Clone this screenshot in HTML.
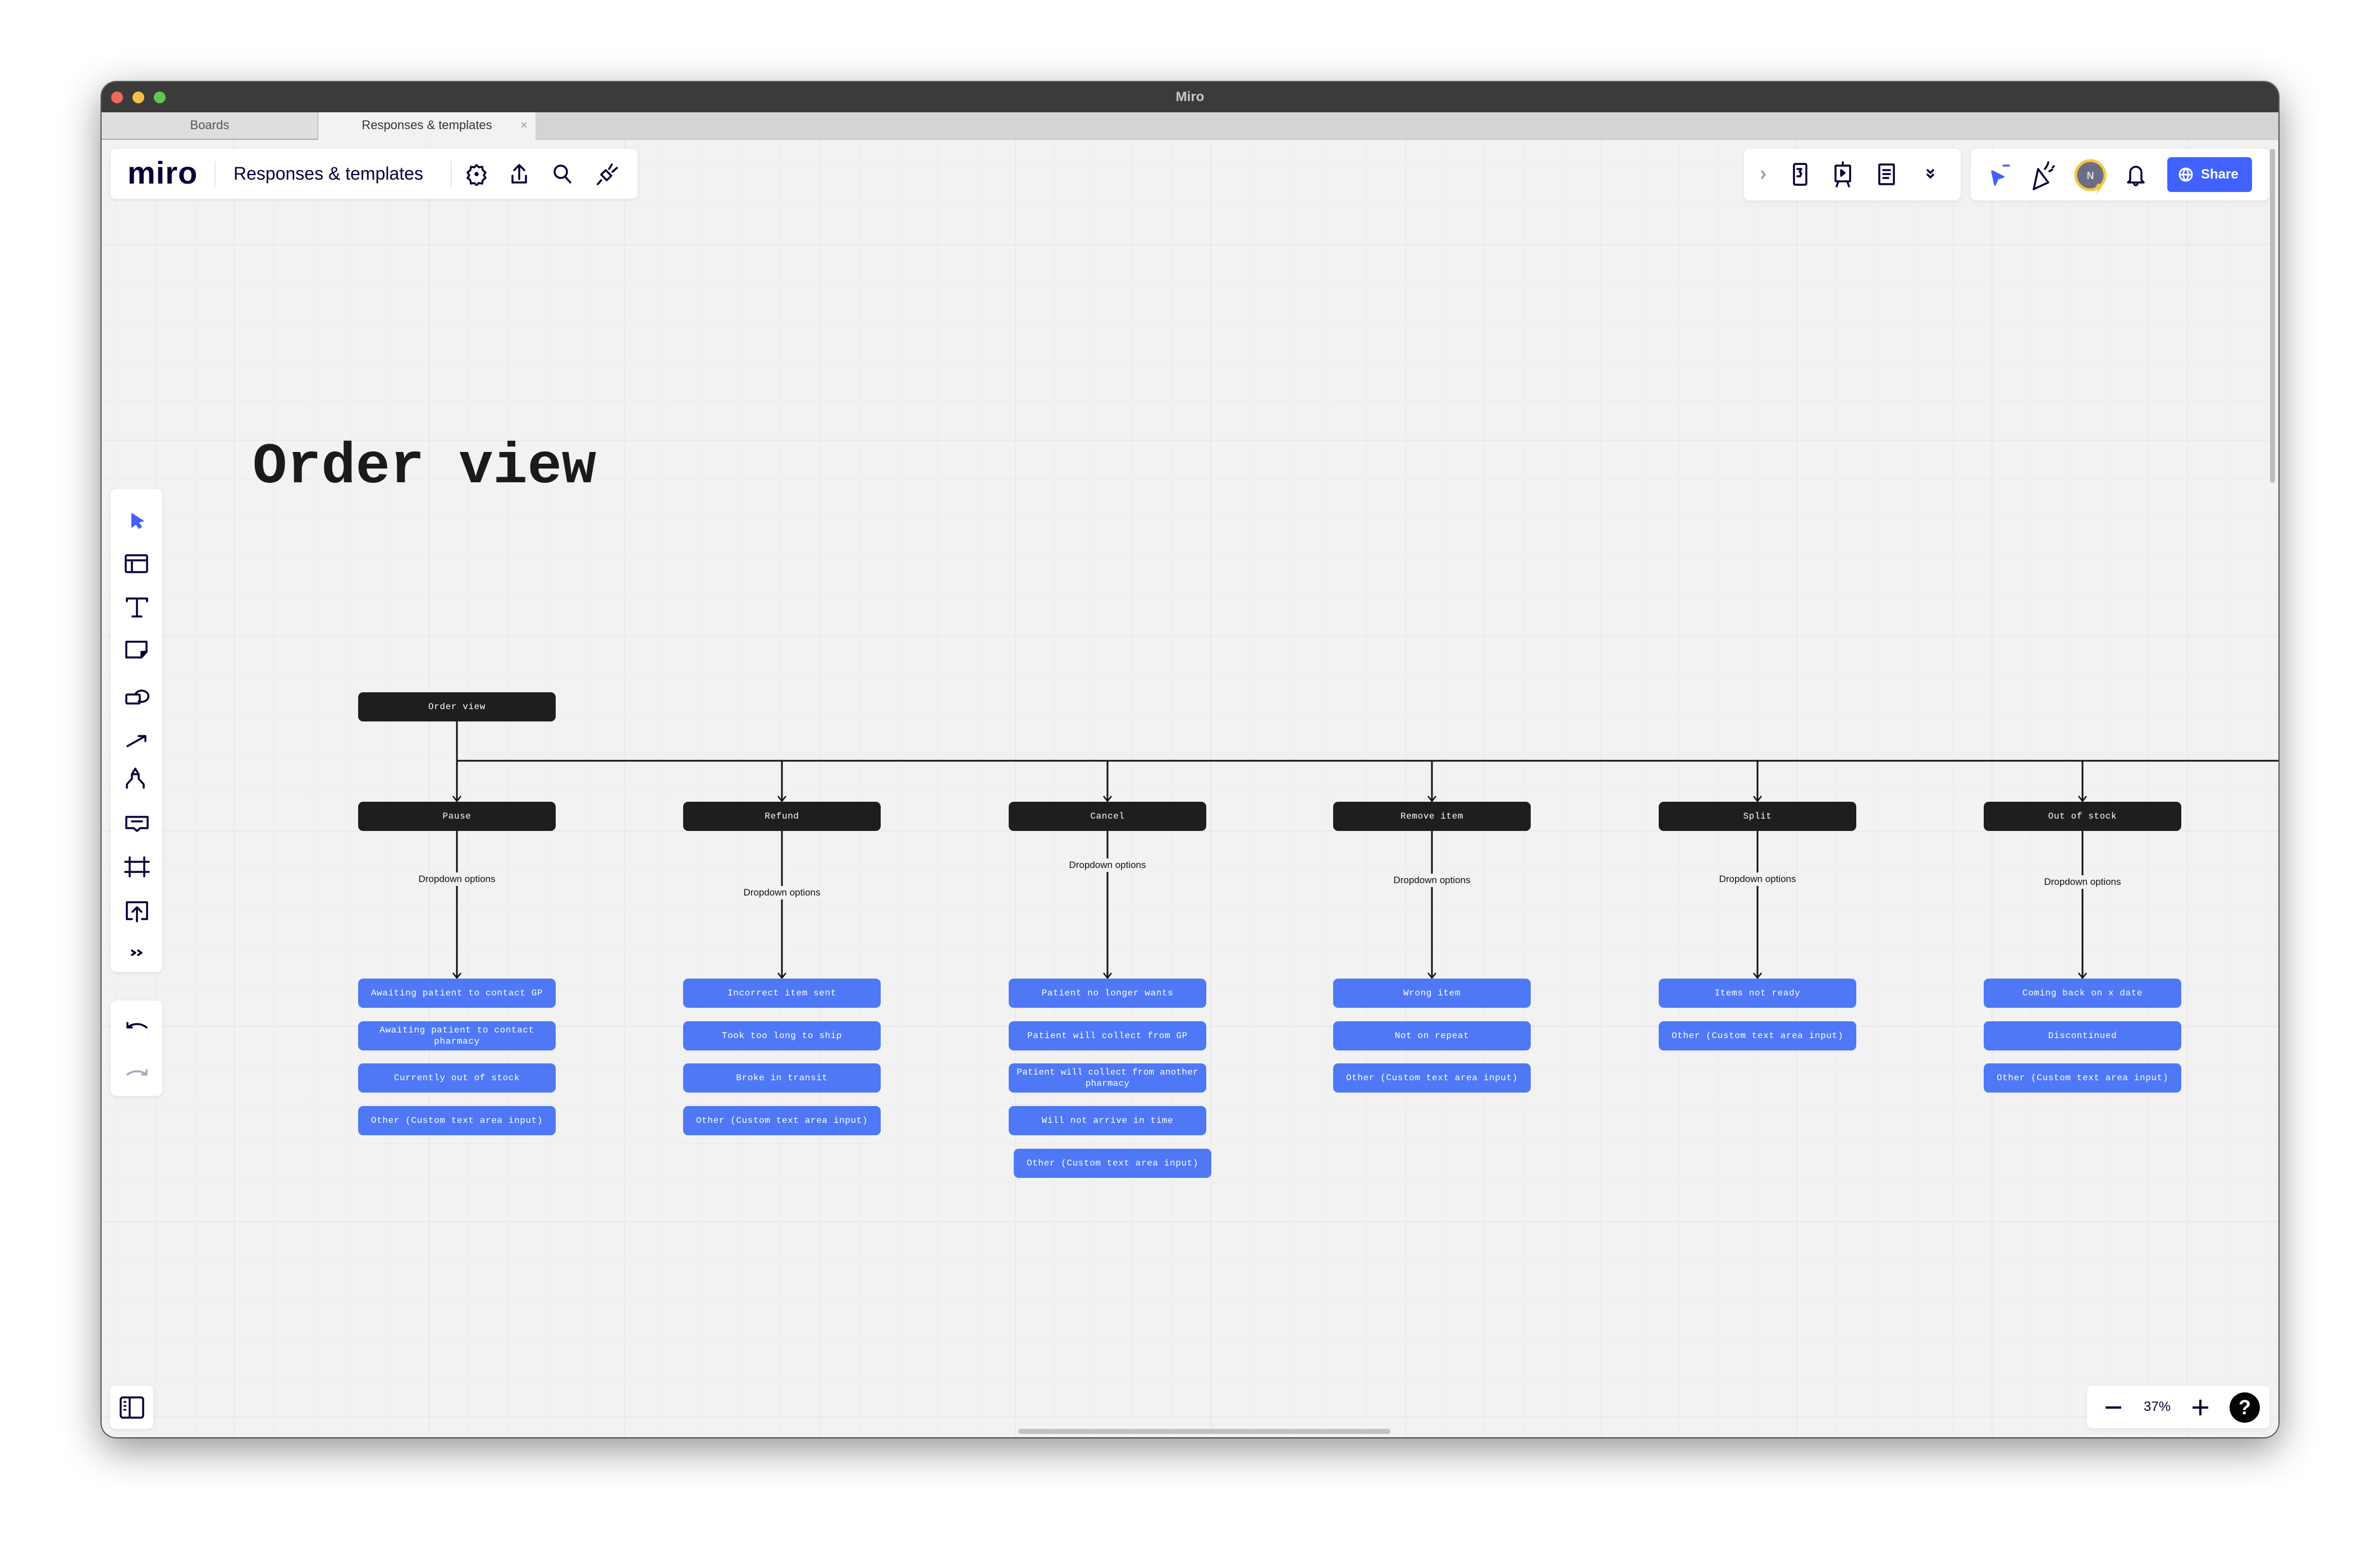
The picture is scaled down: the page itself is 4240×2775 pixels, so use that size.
<!DOCTYPE html>
<html><head><meta charset="utf-8"><style>
*{margin:0;padding:0;box-sizing:border-box}
body{width:4240px;height:2775px;background:#fff;position:relative;overflow:hidden;font-family:"Liberation Sans",sans-serif}
.win{position:absolute;left:181px;top:146px;width:3878px;height:2414px;border-radius:26px;overflow:hidden;box-shadow:0 20px 70px rgba(0,0,0,.45),0 0 0 2px #6a6a6a;background:#f2f2f2}
.title{position:absolute;left:0;top:0;width:100%;height:54px;background:#3c3b3a;color:#c8c8c8;font-size:24px;text-align:center;line-height:54px;font-weight:bold}
.dot{position:absolute;top:17px;width:21px;height:21px;border-radius:50%}
.tabs{position:absolute;left:0;top:54px;width:100%;height:49px;background:#d4d3d6;border-bottom:1px solid #bbb}
.tab{position:absolute;top:0;height:49px;text-align:center;line-height:46px;font-size:22px;color:#555}
.canvas{position:absolute;left:0;top:103px;width:100%;bottom:0;
background-color:#f2f2f2;
background-image:linear-gradient(#e9e9e9 2px,transparent 2px),linear-gradient(90deg,#e9e9e9 2px,transparent 2px),linear-gradient(#eeeeee 2px,transparent 2px),linear-gradient(90deg,#eeeeee 2px,transparent 2px);
background-size:348px 348px,348px 348px,69.6px 69.6px,69.6px 69.6px;
background-position:-113px -162px,-113px -162px,-113px -162px,-113px -162px}
.panel{position:absolute;background:#fff;border-radius:10px;box-shadow:0 2px 8px rgba(0,0,0,.08)}
.abs{position:absolute}
.box{position:absolute;width:352px;height:52px;border-radius:9px;color:#fff;font-family:"Liberation Mono",monospace;font-size:16px;letter-spacing:0.6px;display:flex;align-items:center;justify-content:center;text-align:center;line-height:20px;padding:0 8px}
.bk{background:#1e1e1e}
.bl{background:#4e78f6}
.lbl{position:absolute;font-size:17px;color:#111;background:#f2f2f2;padding:2px 0;transform:translate(-50%,-50%);white-space:nowrap}
</style></head><body>
<div class="win">
 <div class="title">Miro
  <div class="dot" style="left:17px;background:#ee6a5f"></div>
  <div class="dot" style="left:55px;background:#f5bf4f"></div>
  <div class="dot" style="left:93px;background:#61c554"></div>
 </div>
 <div class="tabs">
  <div class="tab" style="left:0;width:386px;background:#dedede;border-right:1px solid #aaa;border-bottom:2px solid #aaa">Boards</div>
  <div class="tab" style="left:386px;width:387px;background:#f2f2f2;color:#333;height:50px">Responses &amp; templates<span style="position:absolute;right:14px;color:#999">×</span></div>
 </div>
 <div class="canvas"></div>
</div>

<div class="panel" style="left:197px;top:265px;width:939px;height:89px">
 <div class="abs" style="left:30px;top:10px;font-size:56px;font-weight:bold;color:#050038;letter-spacing:1px">miro</div>
 <div class="abs" style="left:185px;top:22px;width:2px;height:46px;background:#e6e6ee"></div>
 <div class="abs" style="left:219px;top:26px;font-size:32px;color:#050038">Responses &amp; templates</div>
 <div class="abs" style="left:606px;top:22px;width:2px;height:46px;background:#e6e6ee"></div>
 <svg class="abs" style="left:630px;top:24px" width="330" height="42" viewBox="0 0 330 42" fill="none" stroke="#050038" stroke-width="3.5" stroke-linejoin="round" stroke-linecap="round">
  <path d="M22 5l4 4 6-1 1 6 5 4-3 5 3 5-5 4-1 6-6-1-4 4-4-4-6 1-1-6-5-4 3-5-3-5 5-4 1-6 6 1z"/><circle cx="22" cy="21" r="2" fill="#050038"/>
  <path d="M98 30V5M89 14l9-9 9 9M86 24v12h24V24"/>
  <circle cx="172" cy="17" r="11"/><path d="M180 26l9 10"/>
  <path d="M263 4l-5 8M272 10l-8 7M252 14l10 10-8 8-10-10zM244 32l-6 7"/>
 </svg>
</div>

<div class="panel" style="left:3107px;top:265px;width:386px;height:92px">
 <svg class="abs" style="left:0;top:0" width="386" height="92" fill="none" stroke="#050038" stroke-width="3.5" stroke-linejoin="round" stroke-linecap="round">
  <path d="M32 40l5 6-5 6" stroke="#9a9aa8"/>
  <rect x="89" y="27" width="22" height="37" rx="2"/><path d="M95 36h7l-3 5 3 3-2 5h-5"/>
  <rect x="163" y="30" width="26" height="28" rx="1"/><path d="M176 24v6M168 58l-3 9M184 58l3 9"/><path d="M173 38l6 5-6 5z" fill="#050038"/>
  <rect x="241" y="28" width="26" height="35" rx="1"/><path d="M248 38h12M248 45h12M248 52h9"/>
  <path d="M327 38l5 5 5-5M327 46l5 5 5-5"/>
 </svg>
</div>
<div class="panel" style="left:3511px;top:265px;width:532px;height:92px">
 <svg class="abs" style="left:0;top:0" width="350" height="92" fill="none" stroke-width="3.5" stroke-linejoin="round" stroke-linecap="round">
  <path d="M38 40l20 10-10 3-5 11z" fill="#4262ff" stroke="#4262ff"/><path d="M58 30h10" stroke="#4262ff"/>
  <path d="M120 36l18 24-26 12z M132 36l4-6M140 40l5-3M137 28l1-4M146 33l2-2" stroke="#050038"/>
  <circle cx="213" cy="47" r="26" fill="#6b6f86" stroke="#f5c842" stroke-width="5"/>
  <text x="213" y="54" font-size="18" fill="#ddd" stroke="none" text-anchor="middle" font-family="Liberation Sans" font-weight="bold">N</text>
  <path d="M226 62l-6 10h7l-4 10 10-13h-7l4-7z" fill="#f5c842" stroke="none"/>
  <path d="M284 56V42a10 10 0 0 1 20 0v14l4 4h-28zM291 62a3 3 0 0 0 6 0" stroke="#050038"/>
 </svg>
 <div class="abs" style="left:350px;top:15px;width:151px;height:62px;background:#4262ff;border-radius:7px;color:#fff;font-size:24px;font-weight:bold;line-height:62px;padding-left:60px">Share
  <svg class="abs" style="left:20px;top:18px" width="26" height="26" fill="none" stroke="#fff" stroke-width="3"><circle cx="13" cy="13" r="11"/><path d="M2 13h22M13 2c-6 6-6 16 0 22M13 2c6 6 6 16 0 22"/></svg>
 </div>
</div>

<div class="abs" style="left:4044px;top:265px;width:9px;height:595px;background:#bdbdbd;border-radius:5px"></div>
<div class="abs" style="left:1814px;top:2545px;width:663px;height:9px;background:#c2c2c2;border-radius:5px"></div>

<div class="panel" style="left:197px;top:871px;width:92px;height:860px">
 <svg class="abs" style="left:0;top:0" width="92" height="860" fill="none" stroke="#050038" stroke-width="3.5" stroke-linejoin="round" stroke-linecap="round">
  <path d="M38 44l20 13-9 2 6 8-4 3-6-8-7 6z" fill="#4262ff" stroke="#4262ff" stroke-width="2"/>
  <rect x="27" y="118" width="38" height="30" rx="2"/><path d="M27 127h38M38 127v21"/>
  <path d="M29 200v-5h36v5M47 195v32M39 227h16"/>
  <path d="M28 272h36v18l-9 10H28z"/><path d="M55 300v-10h9z" fill="#050038"/>
  <rect x="28" y="366" width="24" height="16" rx="2"/><path d="M44 366a12 10 0 1 1 6 12"/>
  <path d="M30 458l32-18M50 440h12v9"/>
  <path d="M29 532v-6l9-10v-8h12v8l9 10v6M38 508l6-10 6 10"/>
  <path d="M28 584h38v20H53l-6 5-6-5H28zM38 592h18"/>
  <path d="M26 664h42M26 682h42M34 656v34M60 656v34"/>
  <path d="M38 766h-9v-30h36v30h-9M47 770v-24M39 753l8-8 8 8"/>
  <path d="M38 822l6 4-6 4M49 822l6 4-6 4"/>
 </svg>
</div>
<div class="panel" style="left:197px;top:1782px;width:92px;height:170px">
 <svg class="abs" style="left:0;top:0" width="92" height="170" fill="none" stroke-width="3.5" stroke-linecap="round" stroke-linejoin="round">
  <path d="M30 48c10-8 24-8 34 0M30 48V40M30 48h8" stroke="#050038"/>
  <path d="M64 132c-10-8-24-8-34 0M64 132v-8M64 132h-8" stroke="#a8a8c0"/>
 </svg>
</div>

<div class="panel" style="left:196px;top:2468px;width:77px;height:77px">
 <svg class="abs" style="left:17px;top:19px" width="44" height="40" fill="none" stroke="#050038" stroke-width="3.5"><rect x="2" y="2" width="40" height="36" rx="4"/><path d="M18 2v36"/><path d="M7 10h5M7 17h5M7 24h5" stroke-width="3"/></svg>
</div>

<div class="panel" style="left:3718px;top:2468px;width:325px;height:76px">
 <div class="abs" style="left:33px;top:37px;width:28px;height:4px;background:#050038"></div>
 <div class="abs" style="left:101px;top:24px;font-size:24px;color:#050038">37%</div>
 <div class="abs" style="left:188px;top:37px;width:28px;height:4px;background:#050038"></div>
 <div class="abs" style="left:200px;top:25px;width:4px;height:28px;background:#050038"></div>
 <div class="abs" style="left:254px;top:12px;width:54px;height:54px;border-radius:50%;background:#050505;color:#fff;font-size:36px;font-weight:bold;text-align:center;line-height:54px">?</div>
</div>

<div class="abs" style="left:450px;top:772px;font-family:'Liberation Mono',monospace;font-weight:bold;font-size:102px;line-height:120px;color:#1a1a1a">Order view</div>

<svg class="abs" style="left:0;top:0" width="4059" height="2560" fill="none" stroke="#111" stroke-width="3">
 <path d="M814 1284V1355H4059"/>
 <path d="M814 1355V1426M1393 1355V1426M1973 1355V1426M2551 1355V1426M3131 1355V1426M3710 1355V1426"/>
 <path d="M814 1479V1741M1393 1479V1741M1973 1479V1741M2551 1479V1741M3131 1479V1741M3710 1479V1741"/>
 <path stroke-width="2.5" d="M807 1418l7 9 7-9M1386 1418l7 9 7-9M1966 1418l7 9 7-9M2544 1418l7 9 7-9M3124 1418l7 9 7-9M3703 1418l7 9 7-9"/>
 <path stroke-width="2.5" d="M807 1733l7 9 7-9M1386 1733l7 9 7-9M1966 1733l7 9 7-9M2544 1733l7 9 7-9M3124 1733l7 9 7-9M3703 1733l7 9 7-9"/>
</svg>
<div class="lbl" style="left:814px;top:1566px">Dropdown options</div>
<div class="lbl" style="left:1393px;top:1590px">Dropdown options</div>
<div class="lbl" style="left:1973px;top:1541px">Dropdown options</div>
<div class="lbl" style="left:2551px;top:1568px">Dropdown options</div>
<div class="lbl" style="left:3131px;top:1566px">Dropdown options</div>
<div class="lbl" style="left:3710px;top:1571px">Dropdown options</div>

<div class="box bk" style="left:638px;top:1233px">Order view</div>
<div class="box bk" style="left:638px;top:1428px">Pause</div>
<div class="box bk" style="left:1217px;top:1428px">Refund</div>
<div class="box bk" style="left:1797px;top:1428px">Cancel</div>
<div class="box bk" style="left:2375px;top:1428px">Remove item</div>
<div class="box bk" style="left:2955px;top:1428px">Split</div>
<div class="box bk" style="left:3534px;top:1428px">Out of stock</div>

<div class="box bl" style="left:638px;top:1743px">Awaiting patient to contact GP</div>
<div class="box bl" style="left:638px;top:1819px">Awaiting patient to contact<br>pharmacy</div>
<div class="box bl" style="left:638px;top:1894px">Currently out of stock</div>
<div class="box bl" style="left:638px;top:1970px">Other (Custom text area input)</div>

<div class="box bl" style="left:1217px;top:1743px">Incorrect item sent</div>
<div class="box bl" style="left:1217px;top:1819px">Took too long to ship</div>
<div class="box bl" style="left:1217px;top:1894px">Broke in transit</div>
<div class="box bl" style="left:1217px;top:1970px">Other (Custom text area input)</div>

<div class="box bl" style="left:1797px;top:1743px">Patient no longer wants</div>
<div class="box bl" style="left:1797px;top:1819px">Patient will collect from GP</div>
<div class="box bl" style="left:1797px;top:1894px;padding:0 2px;letter-spacing:0.2px;white-space:nowrap">Patient will collect from another<br>pharmacy</div>
<div class="box bl" style="left:1797px;top:1970px">Will not arrive in time</div>
<div class="box bl" style="left:1806px;top:2046px">Other (Custom text area input)</div>

<div class="box bl" style="left:2375px;top:1743px">Wrong item</div>
<div class="box bl" style="left:2375px;top:1819px">Not on repeat</div>
<div class="box bl" style="left:2375px;top:1894px">Other (Custom text area input)</div>

<div class="box bl" style="left:2955px;top:1743px">Items not ready</div>
<div class="box bl" style="left:2955px;top:1819px">Other (Custom text area input)</div>

<div class="box bl" style="left:3534px;top:1743px">Coming back on x date</div>
<div class="box bl" style="left:3534px;top:1819px">Discontinued</div>
<div class="box bl" style="left:3534px;top:1894px">Other (Custom text area input)</div>
</body></html>
